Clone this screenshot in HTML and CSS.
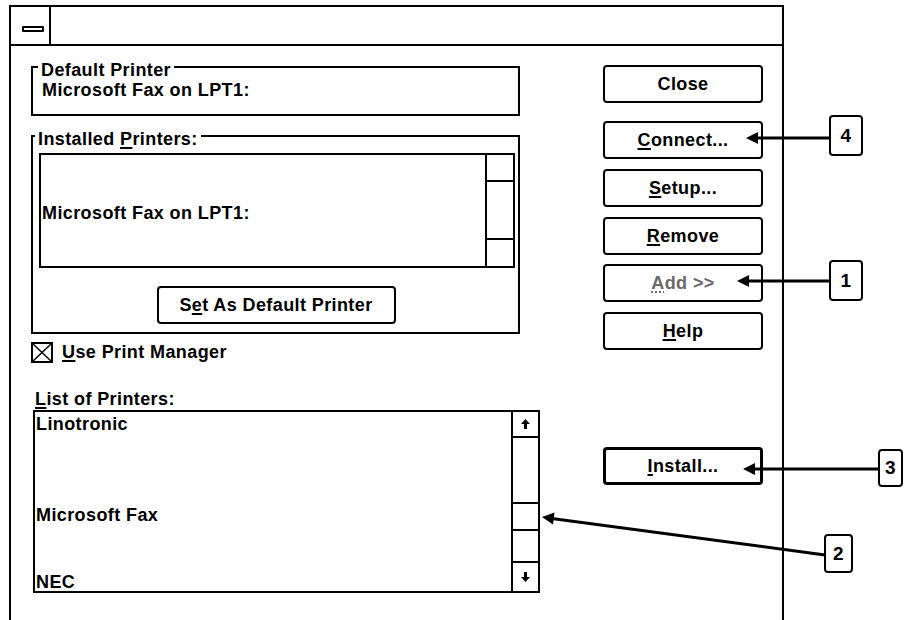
FILE: index.html
```html
<!DOCTYPE html>
<html lang="en">

<head>
    <meta charset="UTF-8">
    <meta name="viewport" content="width=device-width, initial-scale=1.0">
    <title>Printers</title>
    <link rel="stylesheet" href="styles.css">
</head>

<body>
    <div class="window">
        <div class="titlebar">
            <div class="sysmenu"><span class="sysbar"></span></div>
        </div>

        <div class="dialog">
            <div class="left-col">
                <fieldset class="group group-default">
                    <legend>Default Printer</legend>
                    <div class="current-printer">Microsoft Fax on LPT1:</div>
                </fieldset>

                <fieldset class="group group-installed">
                    <legend>Installed <u>P</u>rinters:</legend>
                    <div class="listbox listbox-installed">
                        <div class="list-items installed-items">
                            <div>Microsoft Fax on LPT1:</div>
                        </div>
                        <div class="scrollbar">
                            <div class="sb-cell inst-top"></div>
                            <div class="sb-cell inst-mid"></div>
                            <div class="sb-cell inst-bottom"></div>
                        </div>
                    </div>
                    <div class="center-row">
                        <button class="btn btn-wide">S<u>e</u>t As Default Printer</button>
                    </div>
                </fieldset>

                <label class="check-row">
                    <span class="checkbox">
                        <svg width="22" height="21" viewBox="0 0 22 21">
                            <rect x="1" y="1" width="20" height="19" fill="#fff" stroke="#000" stroke-width="2"/>
                            <path d="M2 2 L20 19 M20 2 L2 19" stroke="#000" stroke-width="1.5"/>
                        </svg>
                    </span>
                    <u>U</u>se Print Manager
                </label>

                <div class="list-label"><u>L</u>ist of Printers:</div>
                <div class="listbox listbox-printers">
                    <div class="list-items printer-items">
                        <div class="item-first">Linotronic</div>
                        <div class="item-mid">Microsoft Fax</div>
                        <div class="item-last">NEC</div>
                    </div>
                    <div class="scrollbar">
                        <div class="sb-cell sb-arrow pr-up">
                            <svg width="9" height="10" viewBox="0 0 9 10"><path d="M4.5 0 L9 5 L6 5 L6 10 L3 10 L3 5 L0 5 Z" fill="#000"/></svg>
                        </div>
                        <div class="sb-cell pr-track1"></div>
                        <div class="sb-cell pr-thumb"></div>
                        <div class="sb-cell pr-track2"></div>
                        <div class="sb-cell sb-arrow pr-down">
                            <svg width="9" height="10" viewBox="0 0 9 10"><path d="M4.5 10 L9 5 L6 5 L6 0 L3 0 L3 5 L0 5 Z" fill="#000"/></svg>
                        </div>
                    </div>
                </div>
            </div>

            <div class="right-col">
                <button class="btn btn-close">Close</button>
                <button class="btn"><u>C</u>onnect...</button>
                <button class="btn"><u>S</u>etup...</button>
                <button class="btn"><u>R</u>emove</button>
                <button class="btn btn-disabled"><u>A</u>dd &gt;&gt;</button>
                <button class="btn"><u>H</u>elp</button>
                <button class="btn btn-default"><u>I</u>nstall...</button>
            </div>
        </div>
    </div>

    <!-- callout annotations drawn over the dialog -->
    <div class="callouts">
        <svg class="arrows" width="913" height="620" viewBox="0 0 913 620">
            <g stroke="#000" stroke-width="3" fill="none">
                <line x1="829" y1="138" x2="752" y2="138"/>
                <line x1="829" y1="281" x2="743" y2="281"/>
                <line x1="878" y1="469" x2="749" y2="469"/>
                <line x1="825" y1="555" x2="548" y2="518"/>
            </g>
            <g fill="#000">
                <path d="M746 138 L758 132 L758 144 Z"/>
                <path d="M737 281 L749 275 L749 287 Z"/>
                <path d="M743 469 L755 463 L755 475 Z"/>
                <path d="M542 517 L554.5 512.5 L553 524.5 Z"/>
            </g>
        </svg>
        <div class="callout callout-4">4</div>
        <div class="callout callout-1">1</div>
        <div class="callout callout-3">3</div>
        <div class="callout callout-2">2</div>
    </div>
</body>

</html>
```

FILE: styles.css
```css
* {
    box-sizing: border-box;
}

body {
    margin: 0;
    padding: 0;
    background-color: #fff;
    color: #000;
    font-family: "Liberation Sans", Arial, sans-serif;
    font-weight: bold;
    font-size: 18px;
    letter-spacing: 0.4px;
    position: relative;
    width: 913px;
    height: 620px;
    overflow: hidden;
}

u {
    text-decoration-thickness: 2px;
    text-underline-offset: 2px;
}

.window {
    margin: 5px 0 0 9px;
    width: 775px;
    height: 615px;
    border: 2px solid #000;
    border-bottom: none;
}

.titlebar {
    height: 39px;
    border-bottom: 2px solid #000;
    display: flex;
}

.sysmenu {
    width: 40px;
    border-right: 2px solid #000;
    display: flex;
    align-items: center;
    justify-content: center;
    padding: 6px 0 0 6px;
}

.sysbar {
    display: block;
    width: 22px;
    height: 6px;
    border: 2px solid #000;
    border-radius: 1px;
}

.dialog {
    display: flex;
    padding-left: 20px;
}

.left-col {
    width: 512px;
    display: flex;
    flex-direction: column;
    align-items: flex-start;
}

.right-col {
    margin-left: 60px;
    width: 160px;
    padding-top: 19px;
    display: flex;
    flex-direction: column;
}

/* group boxes */
.group {
    margin: 0;
    width: 489px;
    border: 2px solid #000;
    padding: 0 3px 0 9px;
}

.group legend {
    margin-left: -4px;
    padding: 6px 3px 0;
    line-height: 20px;
}

.group-default {
    margin-top: 8px;
    padding-bottom: 14px;
}

.current-printer {
    line-height: 20px;
}

.group-installed {
    margin-top: 7px;
    padding-left: 6px;
    padding-bottom: 8px;
}

/* list boxes */
.listbox {
    border: 2px solid #000;
    display: flex;
    background-color: #fff;
}

.list-items {
    flex: 1;
    line-height: 20px;
    padding-left: 1px;
}

.listbox-installed {
    margin-top: 4px;
    width: 476px;
    height: 115px;
}

.installed-items {
    display: flex;
    align-items: center;
    padding-top: 4px;
}

.scrollbar {
    width: 28px;
    border-left: 2px solid #000;
    display: flex;
    flex-direction: column;
}

.sb-cell {
    border-color: #000;
    border-style: solid;
    border-width: 0;
}

.sb-arrow {
    display: flex;
    align-items: center;
    justify-content: center;
}

.inst-top {
    height: 27px;
    border-bottom-width: 2px;
}

.inst-mid {
    height: 58px;
    border-bottom-width: 2px;
}

.inst-bottom {
    flex: 1;
}

.listbox-printers {
    margin-left: 2px;
    width: 507px;
    height: 183px;
}

.listbox-printers .scrollbar {
    width: 27px;
}

.printer-items {
    padding-top: 2px;
}

.item-mid {
    margin-top: 71px;
}

.item-last {
    margin-top: 47px;
}

.pr-up {
    height: 26px;
    border-bottom-width: 2px;
}

.pr-track1 {
    height: 64px;
}

.pr-thumb {
    height: 29px;
    border-top-width: 2px;
    border-bottom-width: 2px;
}

.pr-track2 {
    height: 30px;
}

.pr-down {
    flex: 1;
    border-top-width: 2px;
}

.center-row {
    display: flex;
    justify-content: center;
    padding-top: 18px;
    padding-right: 2px;
}

/* checkbox */
.check-row {
    margin-top: 7px;
    display: flex;
    align-items: center;
    height: 22px;
}

.checkbox {
    display: flex;
    margin-right: 9px;
}

.list-label {
    margin-top: 26px;
    margin-left: 4px;
    line-height: 20px;
    margin-bottom: 1px;
}

/* buttons */
.btn {
    font: inherit;
    letter-spacing: inherit;
    color: #000;
    background-color: #fff;
    border: 2px solid #000;
    border-radius: 4px;
    height: 38px;
    width: 160px;
    padding: 0;
    margin: 0 0 10px;
    line-height: 20px;
}

.btn-wide {
    width: 239px;
    margin: 0;
}

.btn-close {
    margin-bottom: 18px;
}

.btn-disabled {
    color: #6a6a6a;
    margin-top: -1px;
}

.btn-disabled u {
    text-decoration-style: dotted;
}

.btn-default {
    margin-top: 87px;
    border-width: 3px;
}

/* annotations */
.callouts {
    position: absolute;
    top: 0;
    left: 0;
    width: 913px;
    height: 620px;
    pointer-events: none;
}

.arrows {
    display: block;
}

.callout {
    position: absolute;
    border: 2px solid #000;
    border-radius: 4px;
    background-color: #fff;
    display: flex;
    align-items: center;
    justify-content: center;
    font-size: 19px;
}

.callout-4 {
    left: 829px;
    top: 115px;
    width: 34px;
    height: 41px;
}

.callout-1 {
    left: 829px;
    top: 260px;
    width: 34px;
    height: 41px;
}

.callout-3 {
    left: 878px;
    top: 449px;
    width: 25px;
    height: 38px;
}

.callout-2 {
    left: 824px;
    top: 534px;
    width: 29px;
    height: 39px;
}
```
